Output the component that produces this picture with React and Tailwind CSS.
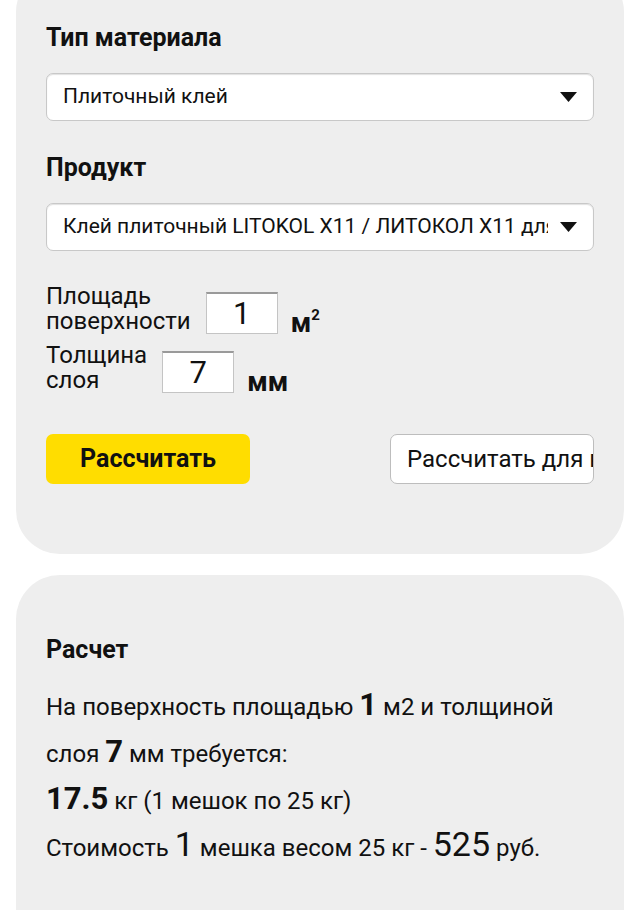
import { useState } from 'react';

const font = { fontFamily: 'Roboto, "Liberation Sans", sans-serif' };

function Caret() {
  return (
    <svg width="17" height="10" viewBox="0 0 17 10" className="shrink-0">
      <path d="M0 0 H17 L8.5 10 Z" fill="#111" />
    </svg>
  );
}

function Select({ value }) {
  return (
    <div className="flex h-[48px] items-center gap-[12px] rounded-[7px] border border-[#c8c8c8] bg-white pl-[16px] pr-[16px] shadow-[inset_0_1px_1px_rgba(0,0,0,0.12)]">
      <span className="flex-1 overflow-hidden whitespace-nowrap text-[21px] text-[#111]">{value}</span>
      <Caret />
    </div>
  );
}

function NumField({ value, label, unit }) {
  return (
    <div className="flex items-end">
      <div className="text-[24px] leading-[25px] text-[#111]">
        {label.map(l => (
          <div key={l}>{l}</div>
        ))}
      </div>
      <div className="ml-[15px] flex h-[42px] w-[72px] items-center justify-center border border-[#c4c4c4] border-t-2 border-t-[#9a9a9a] bg-white text-[31px] leading-none text-[#111]">
        {value}
      </div>
      <div className="ml-[13px] mb-[-3px] text-[27px] font-bold leading-[28px] text-[#111]">{unit}</div>
    </div>
  );
}

export default function App() {
  const [area] = useState(1);
  const [depth] = useState(7);

  return (
    <div className="min-h-[910px] overflow-hidden bg-white px-[16px]" style={font}>
      <section className="mt-[-32px] rounded-[44px] bg-[#eeeeee] px-[30px] pt-[56px] pb-[70px]">
        <h2 className="text-[25px] font-bold leading-[28px] text-[#111]">Тип материала</h2>
        <div className="mt-[21px]">
          <Select value="Плиточный клей" />
        </div>

        <h2 className="mt-[33px] text-[25px] font-bold leading-[28px] text-[#111]">Продукт</h2>
        <div className="mt-[21px]">
          <Select value="Клей плиточный LITOKOL X11 / ЛИТОКОЛ X11 для" />
        </div>

        <div className="mt-[33px] flex flex-col gap-[9px]">
          <NumField
            value={area}
            label={['Площадь', 'поверхности']}
            unit={<span>м<sup className="top-[-12px] text-[15px]">2</sup></span>}
          />
          <NumField value={depth} label={['Толщина', 'слоя']} unit="мм" />
        </div>

        <div className="mt-[41px] flex items-center justify-between">
          <button className="h-[50px] w-[204px] rounded-[7px] bg-[#ffdd00] text-[25px] font-bold text-[#111]">
            Рассчитать
          </button>
          <button className="h-[50px] w-[204px] overflow-hidden whitespace-nowrap rounded-[7px] border border-[#bdbdbd] bg-white pl-[16px] text-left text-[24px] text-[#111]">
            Рассчитать для всей площади
          </button>
        </div>
      </section>

      <section className="mt-[21px] rounded-t-[44px] bg-[#eeeeee] px-[30px] pt-[61px] pb-[60px]">
        <h3 className="text-[25px] font-bold leading-[28px] text-[#111]">Расчет</h3>
        <div className="mt-[20px] text-[24px] leading-[47px] text-[#111]">
          <p>
            На поверхность площадью <b className="text-[31px] leading-none">{area}</b> м2 и толщиной слоя{' '}
            <b className="text-[31px] leading-none">{depth}</b> мм требуется:
          </p>
          <p>
            <b className="text-[31px] leading-none">17.5</b> кг (1 мешок по 25 кг)
          </p>
          <p>
            Стоимость <span className="text-[34px] leading-none">1</span> мешка весом 25 кг -{' '}
            <span className="text-[34px] leading-none">525</span> руб.
          </p>
        </div>
      </section>
    </div>
  );
}
